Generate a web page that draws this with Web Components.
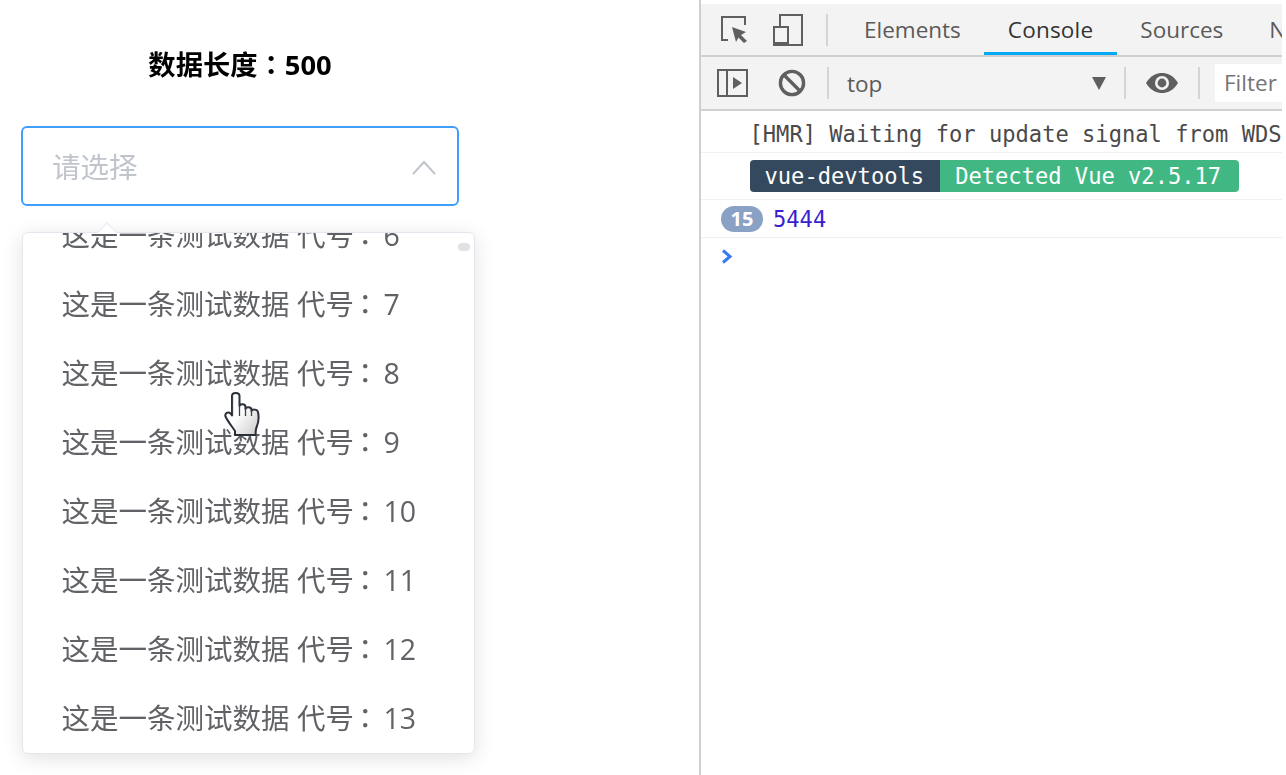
<!DOCTYPE html>
<html lang="zh">
<head>
<meta charset="utf-8">
<title>select demo</title>
<style>
  html, body { margin: 0; height: 100%; background: #fff; overflow: hidden; }
  body { font-family: "Open Sans", "Noto Sans CJK SC", sans-serif; }
</style>
</head>
<body>
<demo-page>
  <select-demo slot="left" length="500">
    <test-option code="6"></test-option>
    <test-option code="7"></test-option>
    <test-option code="8"></test-option>
    <test-option code="9"></test-option>
    <test-option code="10"></test-option>
    <test-option code="11"></test-option>
    <test-option code="12"></test-option>
    <test-option code="13"></test-option>
  </select-demo>
  <dev-tools slot="right">
    <console-row pad="4">[HMR] Waiting for update signal from WDS</console-row>
    <console-row height="46"><vue-badge></vue-badge></console-row>
    <console-row height="37" count="15"><span style="color:#3a1fd0">5444</span></console-row>
    <console-prompt></console-prompt>
  </dev-tools>
</demo-page>

<script>
const CJK = '"Open Sans", "Noto Sans CJK SC", sans-serif';
const MONO = '"DejaVu Sans Mono", monospace';
// the traditional forms centre the full-width colon, as the reference does
const COLON = '<span lang="zh-Hant" style="font-family:\'Noto Sans CJK TC\',sans-serif">：</span>';
const ITEM_COLON = '<span lang="zh-Hant" style="font-family:\'Noto Sans CJK TC\',sans-serif;margin:0 4px 0 -3px">：</span>';

/**
 * Page frame: demo on the left, devtools on the right
 */
class DemoPage extends HTMLElement {
    connectedCallback() {
        this.attachShadow({ mode: 'open' }).innerHTML = `
            <style>
                :host {
                    display: grid; grid-template-columns: 699px 583px; height: 775px; overflow: hidden;
                    filter: blur(.45px);
                }
            </style>
            <slot name="left"></slot>
            <slot name="right"></slot>
        `;
    }
}

class SelectDemo extends HTMLElement {
    connectedCallback() {
        const length = this.getAttribute('length') ?? '0';
        this.attachShadow({ mode: 'open' }).innerHTML = `
            <style>
                :host { display: block; position: relative; font-family: ${CJK}; }
                h3 {
                    margin: 0; width: 480px; padding-top: 44px; height: 38px;
                    text-align: center; font-size: 27.3px; line-height: 38px; font-weight: 700; color: #000;
                }
                .input {
                    box-sizing: border-box; margin: 44px 0 0 21px; width: 438px; height: 80px;
                    border: 2px solid #409eff; border-radius: 6px;
                    display: flex; align-items: center; justify-content: space-between;
                    padding: 0 21px 1px 29px;
                    font-size: 28.5px; color: #c0c4cc;
                }
                .input svg { display: block; margin-top: 4px; }
                .popper {
                    box-sizing: border-box; margin: 26px 0 0 22px; width: 453px; height: 522px;
                    position: relative; background: #fff; border: 1px solid #e4e7ed; border-radius: 6px;
                    box-shadow: 0 4px 20px rgba(0,0,0,.12);
                }
                .arrow {
                    position: absolute; left: 73px; top: -11px; width: 0; height: 0;
                    border: 11px solid transparent; border-top: 0; border-bottom-color: #ebeef5;
                }
                .arrow::after {
                    content: ""; position: absolute; left: -10px; top: 2px; width: 0; height: 0;
                    border: 10px solid transparent; border-top: 0; border-bottom-color: #fff;
                }
                .scroll { height: 100%; overflow: hidden; border-radius: 6px; }
                .list { margin-top: -34px; }
                .thumb {
                    position: absolute; right: 4px; top: 10px; width: 12px; height: 8px;
                    border-radius: 4px; background: #dfe1e5;
                }
                .cursor { position: absolute; left: 224px; top: 391px; }
            </style>
            <h3>数据长度${COLON}${length}</h3>
            <div class="input">
                <span>请选择</span>
                <svg width="24" height="15" viewBox="0 0 24 15" fill="none" stroke="#c0c4cc" stroke-width="2">
                    <path d="M1 14 L12 2 L23 14"/>
                </svg>
            </div>
            <div class="popper">
                <span class="arrow"></span>
                <div class="scroll"><div class="list"><slot></slot></div></div>
                <span class="thumb"></span>
            </div>
            <svg class="cursor" width="38" height="48" viewBox="0 0 38 48">
                <defs>
                    <linearGradient id="hand" x1="0" y1="0" x2="1" y2="1">
                        <stop offset=".45" stop-color="#fff"/>
                        <stop offset="1" stop-color="#c8c8c8"/>
                    </linearGradient>
                </defs>
                <path d="M8 5 C8 1 15.5 1 15.5 5 L15.5 15 C16 12.5 21 12.5 21.5 15.5 L21.5 18
                         C22 15.5 27 15.5 27.5 18.5 L27.5 20 C28 18 33.5 18 34 21
                         C35 26 35 30 33 35 C32 37 31.5 39 31.5 44 L11 44 L11 40
                         C8.5 36 4 31 1.5 25.5 C0.5 22.5 4 20 6.5 22.5 L8 24.5 Z"
                      fill="url(#hand)" stroke="#2a3038" stroke-width="2" stroke-linejoin="round"/>
                <path d="M8.5 5 V24 M15.5 14 V25 M21.5 17 V25 M27.5 19 V25" stroke="#3a4048" stroke-width="1.3" fill="none"/>
            </svg>
        `;
    }
}

class TestOption extends HTMLElement {
    connectedCallback() {
        const code = this.getAttribute('code');
        this.attachShadow({ mode: 'open' }).innerHTML = `
            <style>
                :host {
                    display: block; height: 69px; line-height: 69px; padding-left: 38.5px;
                    font-family: ${CJK}; font-size: 28.5px; color: #606266; white-space: nowrap;
                }
            </style>
            这是一条测试数据 代号${ITEM_COLON}${code}
        `;
    }
}

class DevTools extends HTMLElement {
    connectedCallback() {
        const tab = (name, cls = '') => `<span class="tab ${cls}">${name}</span>`;
        this.attachShadow({ mode: 'open' }).innerHTML = `
            <style>
                :host {
                    display: block; box-sizing: border-box; height: 775px; padding-top: 4px;
                    border-left: 2px solid #cfcfcf; overflow: hidden; background: #fff;
                    font-family: "Open Sans", sans-serif; color: #5a5a5a; min-width: 0;
                }
                .bar {
                    display: flex; align-items: center; background: #f3f3f3;
                    border-bottom: 2px solid #d0d0d0; white-space: nowrap; overflow: hidden;
                }
                .tabs { height: 51px; }
                .tools { height: 52px; }
                svg { display: block; flex: none; }
                .sep { flex: none; width: 2px; height: 32px; background: #d4d4d4; }
                .tab {
                    flex: none; height: 51px; line-height: 51px; padding: 0 23px; box-sizing: border-box;
                    font-size: 22.5px; position: relative;
                }
                .tab.on { color: #333; letter-spacing: .2px; padding: 0 24px; }
                .tab.on::after {
                    content: ""; position: absolute; left: 0; right: 0; bottom: 0; height: 3px; background: #03a9f4;
                }
                .top { flex: none; width: 295px; display: flex; justify-content: space-between; align-items: center;
                       padding: 0 18px 0 18px; box-sizing: border-box; font-size: 22.5px; }
                .filter { flex: none; margin-left: 15px; width: 80px; height: 38px; line-height: 38px; background: #fff;
                          padding-left: 9px; font-size: 22.5px; color: #757575; }
            </style>
            <div class="bar tabs">
                <svg style="margin-left:19px" width="28" height="32" viewBox="0 0 28 32" fill="none">
                    <path d="M8 26 H2 V3 H25 V11" stroke="#5f5f5f" stroke-width="2"/>
                    <path d="M12 13 L26 18 L21 21 L27 27 L24 29 L18.5 23.5 L16 28 Z" fill="#5f5f5f"/>
                </svg>
                <svg style="margin-left:24px" width="32" height="34" viewBox="0 0 32 34" fill="none" stroke="#5f5f5f" stroke-width="2">
                    <path d="M8 14 V2 H30 V32 H17"/>
                    <rect x="2" y="14" width="14" height="18"/>
                    <path d="M1 30.5 H17" stroke-width="3"/>
                </svg>
                <span class="sep" style="margin-left:22px"></span>
                <span style="width:13px;flex:none"></span>
                ${tab('Elements')}${tab('Console', 'on')}${tab('Sources')}${tab('Network')}
            </div>
            <div class="bar tools">
                <svg style="margin-left:16px" width="32" height="28" viewBox="0 0 32 28" fill="none" stroke="#5f5f5f" stroke-width="2">
                    <rect x="1" y="1" width="29" height="26"/>
                    <path d="M10 1 V27"/>
                    <path d="M16 8 L25 14 L16 20 Z" fill="#5f5f5f" stroke="none"/>
                </svg>
                <svg style="margin-left:29px" width="28" height="28" viewBox="0 0 28 28" fill="none" stroke="#5f5f5f" stroke-width="3.4">
                    <circle cx="14" cy="14" r="11.6"/>
                    <path d="M6 6 L22 22"/>
                </svg>
                <span class="sep" style="margin-left:21px"></span>
                <div class="top">
                    <span>top</span>
                    <svg width="14" height="13" viewBox="0 0 14 13"><path d="M0 0 H14 L7 13 Z" fill="#5f5f5f"/></svg>
                </div>
                <span class="sep"></span>
                <svg style="margin-left:19px" width="34" height="22" viewBox="0 0 34 22">
                    <path d="M1 11 C6 3 12 1 17 1 C22 1 28 3 33 11 C28 19 22 21 17 21 C12 21 6 19 1 11 Z" fill="#5f5f5f"/>
                    <circle cx="17" cy="11" r="7" fill="#f3f3f3"/>
                    <circle cx="17" cy="11" r="4.4" fill="#5f5f5f"/>
                </svg>
                <span class="sep" style="margin-left:19px"></span>
                <span class="filter">Filter</span>
            </div>
            <slot></slot>
        `;
    }
}

class ConsoleRow extends HTMLElement {
    connectedCallback() {
        const height = this.getAttribute('height') ?? '41';
        const pad = this.getAttribute('pad') ?? '0';
        const count = this.getAttribute('count');
        this.attachShadow({ mode: 'open' }).innerHTML = `
            <style>
                :host {
                    display: flex; align-items: center; box-sizing: border-box; height: ${+height + 1}px;
                    padding: ${pad}px 0 0 48.5px; border-bottom: 1px solid #f0f0f0;
                    font-family: ${MONO}; font-size: 22.1px; color: #4a4a4a; white-space: nowrap; overflow: hidden;
                }
                :host([count]) { padding-left: 20px; }
                .count {
                    width: 42px; height: 26px; line-height: 26px; border-radius: 13px; margin-right: 10px;
                    background: #8aa1c6; color: #fff; text-align: center; font-size: 20px; font-weight: 700;
                    font-family: "Open Sans", sans-serif;
                }
            </style>
            ${count ? `<span class="count">${count}</span>` : ''}
            <slot></slot>
        `;
    }
}

class VueBadge extends HTMLElement {
    connectedCallback() {
        this.attachShadow({ mode: 'open' }).innerHTML = `
            <style>
                :host { display: inline-flex; height: 32px; line-height: 32px; color: #fff; }
                span { padding: 0 15px; }
                .a { background: #35495e; border-radius: 4px 0 0 4px; padding-right: 16px; }
                .b { background: #41b883; border-radius: 0 4px 4px 0; padding-right: 18px; }
            </style>
            <span class="a">vue-devtools</span><span class="b">Detected Vue v2.5.17</span>
        `;
    }
}

class ConsolePrompt extends HTMLElement {
    connectedCallback() {
        this.attachShadow({ mode: 'open' }).innerHTML = `
            <style>
                :host { display: block; padding: 11px 0 0 20px; }
                svg { display: block; }
            </style>
            <svg width="12" height="15" viewBox="0 0 12 15" fill="none" stroke="#367cf1" stroke-width="3">
                <path d="M2 1.5 L9 7.5 L2 13.5"/>
            </svg>
        `;
    }
}

customElements.define('demo-page', DemoPage);
customElements.define('select-demo', SelectDemo);
customElements.define('test-option', TestOption);
customElements.define('dev-tools', DevTools);
customElements.define('console-row', ConsoleRow);
customElements.define('vue-badge', VueBadge);
customElements.define('console-prompt', ConsolePrompt);
</script>
</body>
</html>
